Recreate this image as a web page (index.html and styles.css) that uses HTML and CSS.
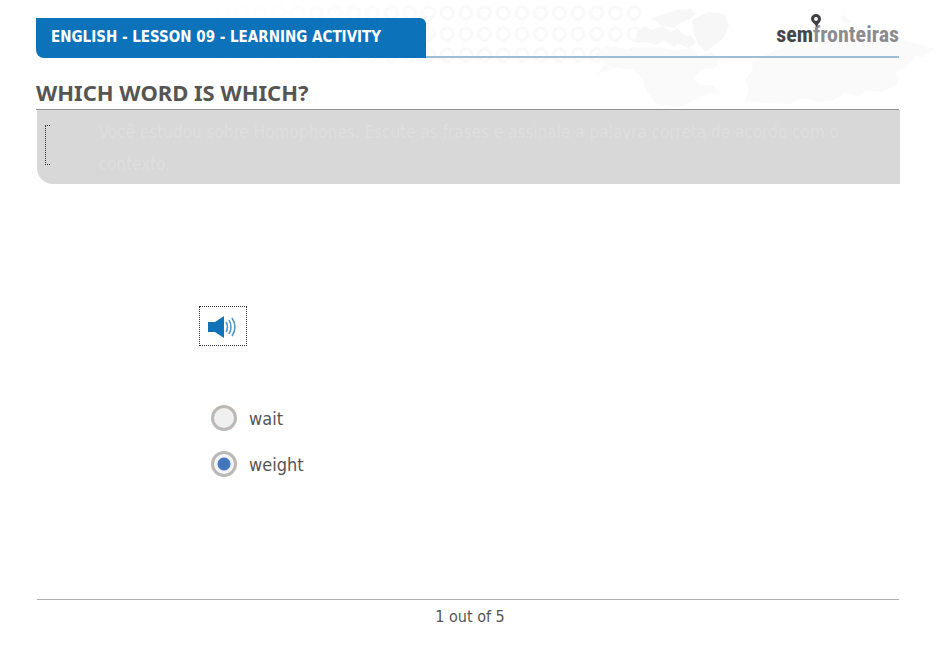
FILE: index.html
```html
<!DOCTYPE html>
<html lang="en">
<head>
    <meta charset="UTF-8">
    <meta name="viewport" content="width=device-width, initial-scale=1.0">
    <title>English - Lesson 09 - Learning Activity</title>
    <link rel="stylesheet" href="styles.css">
</head>
<body>
    <svg class="backdrop" width="740" height="110" viewBox="0 0 740 110" aria-hidden="true">
        <defs>
            <pattern id="pins" width="18.700" height="21" patternUnits="userSpaceOnUse">
                <path d="M9 20l-3-2a6 6 0 1 1 6 0z" fill="none" stroke="#f9f9f9" stroke-width="3"/>
            </pattern>
            <linearGradient id="fade" x1="0" x2="1">
                <stop offset="0" stop-color="#fff"/>
                <stop offset="0.600" stop-color="#fff" stop-opacity="0"/>
                <stop offset="1" stop-color="#fff" stop-opacity="0"/>
            </linearGradient>
        </defs>
        <rect width="450" height="63" fill="url(#pins)"/>
        <rect width="450" height="63" fill="url(#fade)"/>
        <g fill="#fafafa">
            <path d="M400 54l12-8 24 4 20-4 24 4 16-2 8 8 12-4 10 8-6 8-14 2-8 8 6 6 14 2 8 8-12-1-16 8-12 6-25-3-9-12-4-14-10-8-16-2-20 6 8-10z"/>
            <path fill="#f7f7f7" d="M442 31l8-5 6 4 12-4 8 6 6-4 8 8 6-1 5 8-8 5-10-5-4 4-10-6-8 4-10-3-10 1z"/>
            <path fill="#f7f7f7" d="M456 19l12-5 14-4 14-1 5 4-6 6-10 4-6 5-12-2-6-5z"/>
            <path fill="#f7f7f7" d="M497 20l16-8 16 2 5 10-5 14-10 7-8 7-8-8-4-10z"/>
            <path d="M550 102l4-14-4-8 8-10-2-8 10-4 14-8 16-5 24-2 28-4 30 4 34-2 28 8-12 8-8-1-10 12-9 4 2 12-15 8-16-2-8 6-14-3-12 8-14 1-16-4-14 6z"/>
            <path d="M644 17l6-2 6 7-5 3z"/>
        </g>
    </svg>
    <div class="page">
        <header class="topbar">
            <div class="lesson">ENGLISH - LESSON 09 - LEARNING ACTIVITY</div>
            <div class="logo">
                <span class="logo-sem">sem</span><span class="logo-fronteiras">fronteiras</span>
                <svg class="logo-pin" width="12" height="14" viewBox="0 0 12 14" aria-hidden="true">
                    <path fill="#3f3f41" fill-rule="evenodd" d="M6 0a5 5 0 0 1 5 5c0 3-3.200 4.500-4.500 8.500C5.500 9.500 1 8 1 5a5 5 0 0 1 5-5zm0 3a2 2 0 1 0 0 4 2 2 0 0 0 0-4z"/>
                </svg>
            </div>
        </header>
        <h1 class="title">WHICH WORD IS WHICH?</h1>
        <div class="panel">
            <span class="bracket"></span>
            <p class="instructions">Você estudou sobre Homophones. Escute as frases e assinale a palavra correta de acordo com o contexto.</p>
        </div>
        <main class="question">
            <button class="play" type="button" aria-label="Play audio">
                <svg width="30" height="22" viewBox="0 0 30 22" aria-hidden="true">
                    <path fill="#1272b8" d="M0 6h7l9-6v22l-9-6H0z"/>
                    <path fill="none" stroke="#4b92c8" stroke-width="1.500" d="M18 6q3 5 0 10M21 4q4 7 0 14M24 2q6 9 0 18"/>
                </svg>
            </button>
            <div class="options">
                <label class="option"><input type="radio" name="word" value="wait"> wait</label>
                <label class="option"><input type="radio" name="word" value="weight" checked> weight</label>
            </div>
        </main>
        <footer class="footer">1 out of 5</footer>
    </div>
</body>
</html>
```
FILE: styles.css
```css
* {
    box-sizing: border-box;
}
body {
    margin: 0;
    background: #fff;
    color: #575553;
    font-family: "DejaVu Sans Condensed", "DejaVu Sans", Tahoma, sans-serif;
}
.backdrop {
    position: absolute;
    top: 0;
    left: 195px;
    z-index: -1;
}
.page {
    display: flex;
    flex-direction: column;
    min-height: 100vh;
    padding: 18px 41px 27px 36px;
}
.topbar {
    display: flex;
    justify-content: space-between;
    height: 40px;
    background: linear-gradient(#a0bdd3, #a0bdd3) bottom right / calc(100% - 20px) 2px no-repeat;
}
.lesson {
    width: 390px;
    padding-left: 15px;
    background: #0c72ba;
    border-radius: 0 6px 0 8px;
    color: #fff;
    font-size: 15px;
    font-weight: bold;
    line-height: 38px;
}
.logo {
    position: relative;
    font-family: "Liberation Sans Narrow", "Roboto Condensed", Roboto, sans-serif;
    font-size: 22px;
    font-weight: bold;
    line-height: 34px;
}
.logo-sem {
    color: #454547;
}
.logo-fronteiras {
    color: #8c8c8e;
}
.logo-pin {
    position: absolute;
    top: -4px;
    left: 34px;
}
.title {
    margin: 0;
    padding-top: 18px;
    border-bottom: 1px solid #929292;
    font-family: "Noto Sans", Tahoma, sans-serif;
    font-size: 22px;
    line-height: 33px;
}
.panel {
    display: flex;
    height: 74px;
    margin: 0 -1px 0 1px;
    padding: 6px 40px 0 8px;
    background: #d8d8d8;
    border-radius: 0 0 0 16px;
}
.bracket {
    width: 5px;
    height: 40px;
    margin-top: 9px;
    border: 1px dotted #333;
    border-right: 0;
}
.instructions {
    margin: 0 0 0 49px;
    color: #dedede;
    font-size: 17px;
    line-height: 32px;
}
.question {
    flex: 1;
    padding: 122px 0 40px 163px;
}
.play {
    display: flex;
    align-items: center;
    width: 48px;
    height: 40px;
    padding: 2px 0 0 8px;
    background: #fff;
    border: 1px dotted #333;
    cursor: pointer;
}
.options {
    display: flex;
    flex-direction: column;
    gap: 20px;
    padding: 59px 0 0 12px;
}
.option {
    display: flex;
    align-items: center;
    gap: 12px;
    height: 26px;
    font-size: 18px;
}
.option input {
    appearance: none;
    width: 26px;
    height: 26px;
    margin: 0;
    border: 3px solid #bbb8b5;
    border-radius: 50%;
    background: #f0f0f0;
}
.option input:checked {
    background: radial-gradient(circle, #3b6fb8 0, #4a7cc0 6px, #f2f5f9 7px);
}
.footer {
    margin-left: 1px;
    padding: 4px 0 0 4px;
    border-top: 1px solid #b0b0b0;
    font-size: 16px;
    line-height: 25px;
    text-align: center;
}
```
